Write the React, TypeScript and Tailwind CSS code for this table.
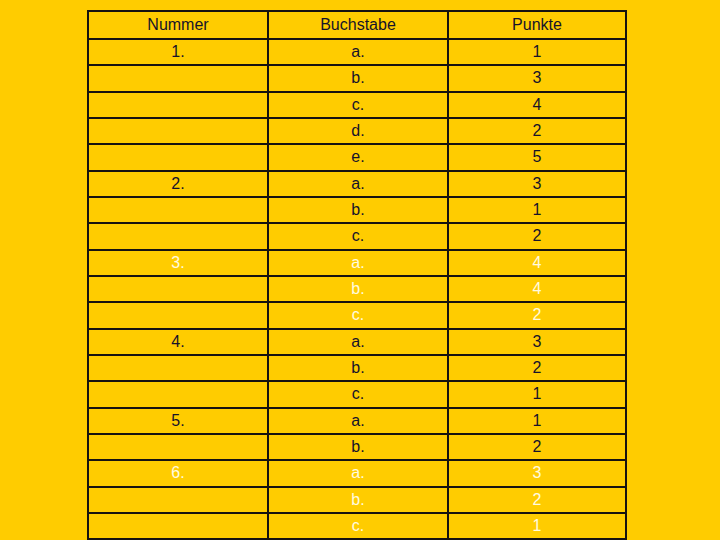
const rows: { num?: string; letter: string; points: string; light?: boolean }[] = [
  { num: "1.", letter: "a.", points: "1" },
  { letter: "b.", points: "3" },
  { letter: "c.", points: "4" },
  { letter: "d.", points: "2" },
  { letter: "e.", points: "5" },
  { num: "2.", letter: "a.", points: "3" },
  { letter: "b.", points: "1" },
  { letter: "c.", points: "2" },
  { num: "3.", letter: "a.", points: "4", light: true },
  { letter: "b.", points: "4", light: true },
  { letter: "c.", points: "2", light: true },
  { num: "4.", letter: "a.", points: "3" },
  { letter: "b.", points: "2" },
  { letter: "c.", points: "1" },
  { num: "5.", letter: "a.", points: "1" },
  { letter: "b.", points: "2" },
  { num: "6.", letter: "a.", points: "3", light: true },
  { letter: "b.", points: "2", light: true },
  { letter: "c.", points: "1", light: true },
];

function Cell({ children, last }: { children?: React.ReactNode; last?: boolean }) {
  return (
    <div
      className={
        "flex items-center justify-center " +
        (last ? "flex-1" : "w-[180px] shrink-0 border-r-2 border-[#161210]")
      }
    >
      {children}
    </div>
  );
}

export default function App() {
  return (
    <div
      className="h-[540px] w-[720px] overflow-hidden bg-[#ffcc00] pt-[10px] pl-[87px] text-[16px] leading-none"
      style={{ fontFamily: '"Liberation Sans", Arial, sans-serif' }}
    >
      <div className="w-[540px] border-x-2 border-t-2 border-[#161210]">
        <div className="flex h-[28px] border-b-2 border-[#161210] text-[#16132a]">
          <Cell>Nummer</Cell>
          <Cell>Buchstabe</Cell>
          <Cell last>Punkte</Cell>
        </div>
        {rows.map((r, i) => (
          <div
            key={i}
            className={
              "flex h-[26.33px] border-b-2 border-[#161210] " +
              (r.light ? "text-[#fffbe0]" : "text-[#16132a]")
            }
          >
            <Cell>{r.num}</Cell>
            <Cell>{r.letter}</Cell>
            <Cell last>{r.points}</Cell>
          </div>
        ))}
      </div>
    </div>
  );
}
